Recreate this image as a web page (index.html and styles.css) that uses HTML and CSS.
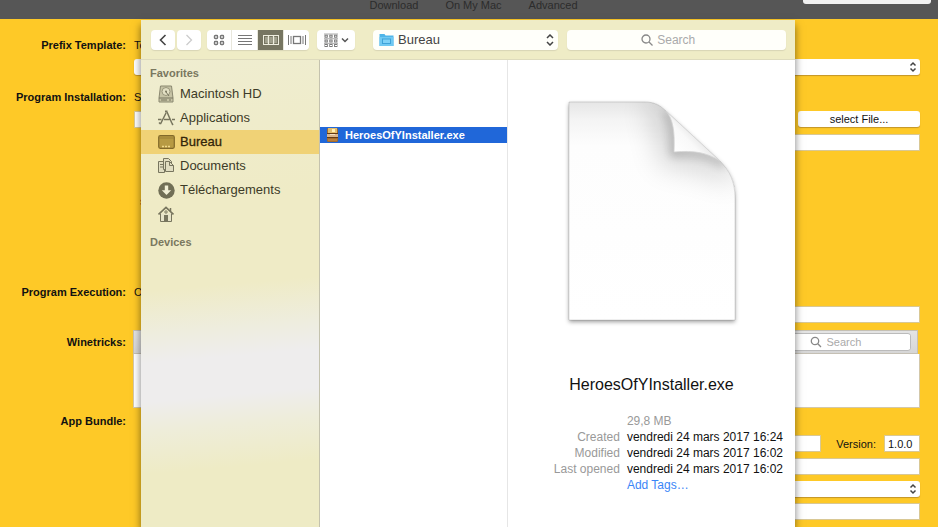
FILE: index.html
```html
<!DOCTYPE html>
<html lang="en">
<head>
    <meta charset="UTF-8">
    <meta name="viewport" content="width=device-width, initial-scale=1.0">
    <title>Heroes Of Y Installer</title>
    <link rel="stylesheet" href="styles.css">
</head>
<body>

    <header class="topbar">
        <nav class="topnav">
            <a href="#download">Download</a>
            <a href="#mac">On My Mac</a>
            <a href="#advanced">Advanced</a>
        </nav>
        <div class="topbox"></div>
    </header>

    <form class="settings">
        <section class="group">
            <label class="group-label" for="template">Prefix Template:</label>
            <div class="fields">
                <p>To</p>
                <div class="popup">
                    <select id="template"><option></option></select>
                    <svg class="arrows" viewBox="0 0 8 12"><path d="M1.500 4.500 4 2l2.500 2.500M1.500 7.500 4 10l2.500-2.500"/></svg>
                </div>
            </div>
        </section>

        <section class="group installation">
            <label class="group-label" for="program">Program Installation:</label>
            <div class="fields">
                <p>S</p>
                <div class="file-line">
                    <input type="text" id="program">
                    <button type="button">select File...</button>
                </div>
                <input type="text" class="indented" aria-label="Arguments">
                <p class="note">s</p>
            </div>
        </section>

        <section class="group execution">
            <label class="group-label" for="execution">Program Execution:</label>
            <div class="fields">
                <p>O</p>
                <input type="text" class="indented" id="execution">
            </div>
        </section>

        <section class="group winetricks">
            <label class="group-label" for="tricks">Winetricks:</label>
            <div class="tricks">
                <div class="tricks-bar">
                    <div class="tricks-search">
                        <svg class="glass" viewBox="0 0 12 12"><circle cx="5" cy="5" r="3.700"/><path d="m7.800 7.800 3.200 3.200"/></svg>
                        <input type="search" id="tricks" placeholder="Search">
                    </div>
                </div>
                <div class="tricks-list"></div>
            </div>
        </section>

        <section class="group bundle">
            <label class="group-label" for="bundle">App Bundle:</label>
            <div class="bundle-fields">
                <div class="version-line">
                    <input type="text" id="bundle">
                    <label for="version">Version:</label>
                    <input type="text" id="version" class="version" value="1.0.0">
                </div>
                <input type="text" aria-label="Identifier">
                <div class="popup">
                    <select aria-label="Category"><option></option></select>
                    <svg class="arrows" viewBox="0 0 8 12"><path d="M1.500 4.500 4 2l2.500 2.500M1.500 7.500 4 10l2.500-2.500"/></svg>
                </div>
                <input type="text" aria-label="Copyright">
            </div>
        </section>
    </form>

    <div class="dialog" role="dialog" aria-label="Open">
        <div class="toolbar">
            <div class="history">
                <button type="button" aria-label="Back"><svg width="10" height="14" viewBox="0 0 10 14"><path d="M7.500 2 2.500 7l5 5" fill="none" stroke="#444" stroke-width="1.600"/></svg></button>
                <button type="button" aria-label="Forward"><svg width="10" height="14" viewBox="0 0 10 14"><path d="m2.500 2 5 5-5 5" fill="none" stroke="#ccc" stroke-width="1.300"/></svg></button>
            </div>
            <div class="views">
                <button type="button" aria-label="Icons"><svg width="12" height="12" viewBox="0 0 12 12" fill="none" stroke="#777" stroke-width="1.400"><rect x="1.500" y="1.500" width="3" height="3" rx=".7"/><rect x="7.500" y="1.500" width="3" height="3" rx=".7"/><rect x="1.500" y="7.500" width="3" height="3" rx=".7"/><rect x="7.500" y="7.500" width="3" height="3" rx=".7"/></svg></button>
                <button type="button" aria-label="List"><svg width="14" height="12" viewBox="0 0 14 12"><path d="M0 1.500h14M0 4.500h14M0 7.500h14M0 10.500h14" stroke="#777"/></svg></button>
                <button type="button" class="active" aria-label="Columns"><svg width="16" height="12" viewBox="0 0 16 12"><rect x=".5" y="1.500" width="15" height="9" fill="none" stroke="#eeedde"/><path d="M2 3h3v6H2zM6.500 3h3v6h-3zM11 3h3v6h-3z" fill="#eeedde" opacity=".35"/><path d="M5.500 2v8M10.500 2v8" stroke="#eeedde" stroke-width="1.300"/></svg></button>
                <button type="button" aria-label="Cover Flow"><svg width="18" height="12" viewBox="0 0 18 12" fill="none" stroke="#777"><rect x="5.500" y="2.500" width="7" height="7" stroke-width="1.300"/><path d="M.5 1v10M3 2v8M15 2v8M17.500 1v10"/></svg></button>
            </div>
            <button type="button" class="arrange" aria-label="Arrange">
                <svg width="14" height="14" viewBox="0 0 14 14" fill="none" stroke="#777"><path d="M0 1h14M0 5.700h14M0 10.400h14" stroke-width=".6"/><rect x="1" y="2.200" width="2.300" height="2"/><rect x="5.800" y="2.200" width="2.300" height="2"/><rect x="10.600" y="2.200" width="2.300" height="2"/><rect x="1" y="7" width="2.300" height="2"/><rect x="5.800" y="7" width="2.300" height="2"/><rect x="10.600" y="7" width="2.300" height="2"/><rect x="1" y="11.500" width="2.300" height="2"/><rect x="5.800" y="11.500" width="2.300" height="2"/><rect x="10.600" y="11.500" width="2.300" height="2"/></svg>
                <svg width="8" height="6" viewBox="0 0 8 6"><path d="m1 1.500 3 3 3-3" fill="none" stroke="#555" stroke-width="1.500"/></svg>
            </button>
            <div class="location">
                <svg width="15" height="14" viewBox="0 0 15 14"><path d="M.5 1h5l1 1.500h8V13H.5z" fill="#50b5e8"/><path d="M.5 4h14v9H.5z" fill="#70c9f2"/><rect x="3.500" y="6" width="8" height="4.500" fill="#7fd2f7" stroke="#3fa3d8"/></svg>
                <select aria-label="Folder"><option>Bureau</option></select>
                <svg class="arrows" viewBox="0 0 8 12"><path d="M1 4l3-3 3 3M1 8l3 3 3-3"/></svg>
            </div>
            <label class="search">
                <svg class="glass" viewBox="0 0 12 12"><circle cx="5" cy="5" r="4"/><path d="m8 8 3.500 3.500"/></svg>
                <input type="search" placeholder="Search" aria-label="Search files">
            </label>
        </div>

        <div class="browser">
            <aside class="sidebar">
                <h2>Favorites</h2>
                <ul>
                    <li><a href="#hd"><svg width="16" height="18" viewBox="0 0 16 18"><path d="M2.500 1h11l1.500 12v4H1v-4z" fill="#c6c3a5" stroke="#8a8870"/><circle cx="8" cy="6.500" r="4" fill="#e3e0c4" stroke="#99967c"/><circle cx="8" cy="6.500" r="1" fill="#77755e"/><path d="M1 13h14M8 7l3 4" stroke="#77755e"/><path d="M3 15h6M11 15h2" stroke="#77755e"/></svg>Macintosh HD</a></li>
                    <li><a href="#apps"><svg width="17" height="16" viewBox="0 0 17 16" fill="none" stroke="#77755e" stroke-width="1.500"><path d="M8 3 2.500 14M9 2l5 11.500M0 9.500h3.500M6 9.500h5.500M14 9.500h3M1 12.500l1.500 1.500M14 13.500l1 1.500"/><path d="M7 1.500h2.500" stroke-width="2"/></svg>Applications</a></li>
                    <li class="selected"><a href="#bureau"><svg width="17" height="14" viewBox="0 0 17 14"><rect x=".7" y=".7" width="15.600" height="12.600" rx="1.500" fill="#b79a43" stroke="#82692a" stroke-width="1.200"/><path d="M1 3h15" stroke="#9a7f36"/><path d="M4 11.500h2M7 11.500h2M10 11.500h2" stroke="#f1d98b" stroke-width="1.500"/></svg>Bureau</a></li>
                    <li><a href="#documents"><svg width="16" height="16" viewBox="0 0 16 16" fill="#e0ddc1" stroke="#77755e"><path d="M.5 3.500h6v11h-6z"/><path d="M5.500.5h5l3 3v8h-8z"/><path d="M7.500 3.500h4l4 4v6h-8z"/><path d="M11.500 3.500v4h4M2 6.500h3M2 9h3" fill="none"/></svg>Documents</a></li>
                    <li><a href="#downloads"><svg width="17" height="17" viewBox="0 0 17 17"><circle cx="8.500" cy="8.500" r="8.200" fill="#716f56"/><path d="M6.800 3.500h3.400v4.700h3L8.500 13 3.800 8.200h3z" fill="#f2f0d6"/></svg>Téléchargements</a></li>
                    <li><a href="#home" aria-label="Home"><svg width="16" height="16" viewBox="0 0 16 16" fill="none" stroke="#77755e"><path d="M2.500 7.500v8h11v-8" fill="#e6e3c8"/><path d="m.5 8.500 7.500-7 7.500 7" stroke-width="1.700"/><path d="M12.500 2v3" stroke-width="1.500"/><rect x="6.500" y="9.500" width="3" height="6" fill="#77755e"/><circle cx="8" cy="6" r="1.200"/></svg></a></li>
                </ul>
                <h2>Devices</h2>
            </aside>

            <div class="files">
                <a class="file" href="#installer">
                    <svg width="11" height="14" viewBox="0 0 11 14"><rect width="11" height="14" rx="1.500" fill="#a46b2c"/><path d="M1 0h9v5H1z" fill="#e3bd6b"/><path d="M5 1h3v3H5z" fill="#fff0b8"/><path d="M0 5h11v4H0z" fill="#d9b48b"/><path d="M0 5.500h11M0 9.500h11" stroke="#633914"/><path d="M3 6.500h5" stroke="#f4e1c4"/><path d="M1 11h9v2H1z" fill="#b97e3c"/></svg>
                    HeroesOfYInstaller.exe
                </a>
            </div>

            <div class="preview">
                <svg class="document" width="183" height="232" viewBox="0 0 183 232">
                    <defs>
                        <linearGradient id="paper" x1="0" y1="0" x2="0" y2="1">
                            <stop offset="0" stop-color="#e6e6e6"/>
                            <stop offset=".08" stop-color="#f4f4f4"/>
                            <stop offset=".2" stop-color="#fdfdfd"/>
                            <stop offset="1" stop-color="#fff"/>
                        </linearGradient>
                        <linearGradient id="fold" gradientUnits="userSpaceOnUse" x1="114" y1="57" x2="136" y2="36">
                            <stop offset="0" stop-color="#fff"/>
                            <stop offset=".6" stop-color="#f9f9f9"/>
                            <stop offset="1" stop-color="#e4e4e4"/>
                        </linearGradient>
                        <clipPath id="edge">
                            <path d="M9 7h76c9 0 15 3 21 9l54 50c10 10 15 21 15 37v122H9z"/>
                        </clipPath>
                        <filter id="drop" x="-10%" y="-10%" width="120%" height="120%">
                            <feDropShadow dx="0" dy="2" stdDeviation="2" flood-opacity=".38"/>
                        </filter>
                        <filter id="wide" x="-80%" y="-80%" width="260%" height="260%">
                            <feGaussianBlur stdDeviation="15"/>
                        </filter>
                        <filter id="near" x="-50%" y="-50%" width="200%" height="200%">
                            <feGaussianBlur stdDeviation="5"/>
                        </filter>
                    </defs>
                    <path d="M9 7h76c9 0 15 3 21 9l54 50c10 10 15 21 15 37v122H9z" fill="#fff" filter="url(#drop)"/>
                    <g clip-path="url(#edge)">
                        <path d="M9 7h166v218H9z" fill="url(#paper)"/>
                        <path d="M95 5c14 14 15 36 17 54 24 0 44 4 60 20" fill="none" stroke="#000" stroke-width="22" opacity=".2" filter="url(#wide)"/>
                        <path d="M106 17c8 12 8 25 8 41 22-2 38 2 50 12" fill="none" stroke="#000" stroke-width="6" opacity=".24" filter="url(#near)"/>
                    </g>
                    <path d="M9 7h76c9 0 15 3 21 9l54 50c10 10 15 21 15 37v122H9z" fill="none" stroke="#000" stroke-opacity=".13"/>
                    <path d="M106 16c7 8 9 20 8 41 21-2 34 1 46 9z" fill="url(#fold)" stroke="#d4d4d4" stroke-width=".8"/>
                </svg>
                <h1>HeroesOfYInstaller.exe</h1>
                <table class="info">
                    <tr><th></th><td class="size">29,8 MB</td></tr>
                    <tr><th>Created</th><td>vendredi 24 mars 2017 16:24</td></tr>
                    <tr><th>Modified</th><td>vendredi 24 mars 2017 16:02</td></tr>
                    <tr><th>Last opened</th><td>vendredi 24 mars 2017 16:02</td></tr>
                    <tr><th></th><td><a href="#tags">Add Tags…</a></td></tr>
                </table>
            </div>
        </div>
    </div>

</body>
</html>
```
FILE: styles.css
```css
* {
    box-sizing: border-box;
}
body {
    margin: 0;
    height: 100vh;
    overflow: hidden;
    position: relative;
    background-color: #fec927;
    font-family: "Liberation Sans", Arial, sans-serif;
    font-size: 11px;
    line-height: 14px;
    color: #111;
}
p, h1, h2, ul {
    margin: 0;
    padding: 0;
}
ul {
    list-style: none;
}
a {
    color: inherit;
    text-decoration: none;
}
svg {
    display: block;
    flex: none;
}
input, select, button {
    font: inherit;
    color: inherit;
    margin: 0;
    padding: 0;
    border: 0;
    outline: 0;
    min-width: 0;
    background-color: #fff;
    appearance: none;
}

/* top bar */
.topbar {
    display: flex;
    justify-content: flex-end;
    height: 19px;
    padding-right: 7px;
    background-color: #565656;
}
.topnav {
    display: flex;
    flex: 1;
    justify-content: center;
    gap: 27px;
    padding-left: 144px;
    color: #2c2c2c;
    line-height: 10px;
}
.topbox {
    width: 128px;
    height: 4px;
    background-color: #f1f1f1;
    border-radius: 0 0 3px 3px;
}

/* settings form */
.settings {
    padding: 19px 18px 0 0;
}
.group {
    display: grid;
    grid-template-columns: 126px 1fr;
    column-gap: 8px;
}
.group-label {
    font-weight: bold;
    text-align: right;
}
.fields {
    display: flex;
    flex-direction: column;
    gap: 7px;
}
.settings input {
    height: 17px;
    border: 1px solid #d9c894;
}
.popup {
    display: flex;
    align-items: center;
    height: 16px;
    padding-right: 3px;
    background-color: #fff;
    border-radius: 3px;
    box-shadow: 0 1px 1px #c3952a;
}
.popup select {
    flex: 1;
    background-color: transparent;
}
.arrows {
    width: 8px;
    height: 12px;
    fill: none;
    stroke: #444;
    stroke-width: 1.5;
    pointer-events: none;
}
.installation {
    margin-top: 15px;
}
.installation .fields {
    gap: 6px;
}
.file-line {
    display: flex;
    gap: 8px;
    padding-top: 1px;
}
.file-line input {
    flex: 1;
}
.file-line button {
    width: 122px;
    height: 16px;
    border-radius: 3px;
    box-shadow: 0 1px 1px #c3952a;
}
.settings .indented {
    margin-left: 60px;
}
.note {
    margin-top: 37px;
    padding-left: 6px;
}
.execution {
    margin-top: 77px;
}
.winetricks {
    margin-top: 7px;
    column-gap: 7px;
}
.winetricks .group-label {
    padding-top: 5px;
}
.tricks-bar {
    display: flex;
    justify-content: flex-end;
    padding: 2px 6px;
    margin-right: 2px;
    background: linear-gradient(#e4e4e4, #d6d6d6);
    border: 1px solid #c5c0b4;
}
.tricks-search {
    display: flex;
    align-items: center;
    width: 50%;
    height: 18px;
    padding-left: 283px;
    gap: 5px;
    background-color: #fff;
    border: 1px solid #bbb;
    border-radius: 3px;
}
.tricks-search input {
    flex: 1;
    height: 14px;
    border: 0;
}
.glass {
    width: 12px;
    height: 12px;
    fill: none;
    stroke: #888;
    stroke-width: 1.3;
}
input::placeholder {
    color: #aaa;
}
.tricks-list {
    height: 54px;
    background-color: #fff;
    border: 1px solid #d3c8aa;
    border-top: 0;
}
.bundle {
    margin-top: 6px;
}
.bundle-fields {
    display: flex;
    flex-direction: column;
    gap: 6px;
    padding: 21px 0 0 60px;
}
.version-line {
    display: flex;
    align-items: center;
}
.version-line input {
    flex: 1;
}
.version-line label {
    padding: 0 8px 0 15px;
}
.version-line .version {
    flex: none;
    width: 36px;
    padding-left: 3px;
}

/* open dialog */
.dialog {
    position: absolute;
    top: 20px;
    bottom: 0;
    left: 141px;
    right: 143px;
    display: flex;
    flex-direction: column;
    background-color: #fff;
    box-shadow: 0 5px 8px rgba(0, 0, 0, 0.5);
}
.toolbar {
    display: flex;
    align-items: center;
    height: 40px;
    padding: 0 9px 0 10px;
    background-color: #efecc6;
    border-bottom: 1px solid #dedbbd;
    font-size: 13px;
    color: #444;
}
.toolbar button {
    display: flex;
    align-items: center;
    justify-content: center;
    height: 20px;
}
.history {
    display: flex;
    gap: 2px;
    margin-right: 6px;
}
.history button {
    width: 24px;
    border-radius: 4px;
    box-shadow: 0 1px 1px #d8d5b5;
}
.views {
    display: flex;
    overflow: hidden;
    border-radius: 4px;
    box-shadow: 0 1px 1px #d8d5b5;
}
.views button {
    width: 24px;
}
.views button + button {
    width: 26px;
    border-left: 1px solid #e8e7dc;
}
.views .active {
    background-color: #767561;
}
.toolbar .arrange {
    width: 38px;
    gap: 3px;
    margin: 0 18px 0 8px;
    border-radius: 4px;
    box-shadow: 0 1px 1px #d8d5b5;
}
.location {
    display: flex;
    align-items: center;
    flex: 5;
    height: 20px;
    gap: 4px;
    margin-right: 9px;
    padding: 0 4px 0 6px;
    background-color: #fffffa;
    border-radius: 4px;
    box-shadow: 0 1px 1px #d8d5b5;
}
.location select {
    flex: 1;
    background-color: transparent;
}
.search {
    display: flex;
    align-items: center;
    justify-content: center;
    flex: 6;
    height: 20px;
    gap: 4px;
    padding-right: 10px;
    background-color: #fffffa;
    border-radius: 4px;
    box-shadow: 0 1px 1px #d8d5b5;
}
.search input {
    flex: none;
    width: 44px;
    background-color: transparent;
}
.search input::-webkit-search-cancel-button {
    display: none;
}
.search input::placeholder {
    font-size: 12px;
}
.browser {
    display: flex;
    flex: 1;
    min-height: 0;
}
.sidebar {
    width: 179px;
    padding-top: 6px;
    border-right: 1px solid #c4c2ae;
    background: linear-gradient(175deg, #efedd0 0%, #efebc6 30%, #efebc6 48%, #eeedde 57%, #eeeded 63%, #eeeded 71%, #eeedda 77%, #eeebc5 86%, #eeebc5 100%);
    color: #3d3b28;
}
.sidebar h2 {
    padding-left: 9px;
    font-size: 11px;
    color: #7a785f;
}
.sidebar ul {
    padding: 2px 0 9px;
    font-size: 13px;
}
.sidebar a {
    display: grid;
    grid-template-columns: 17px 1fr;
    align-items: center;
    column-gap: 5px;
    height: 24px;
    padding-left: 17px;
}
.sidebar .selected {
    background-color: #f0d276;
    color: #33250a;
    -webkit-text-stroke: 0.3px #33250a;
}
.files {
    width: 188px;
    padding-top: 67px;
    border-right: 1px solid #e6e6e6;
}
.file {
    display: flex;
    align-items: center;
    gap: 7px;
    height: 16px;
    padding-left: 7px;
    background-color: #2067d9;
    color: #fff;
    font-weight: bold;
}
.preview {
    display: flex;
    flex: 1;
    flex-direction: column;
    align-items: center;
    padding-top: 35px;
}
.preview h1 {
    margin-top: 48px;
    font-size: 16px;
    font-weight: normal;
    line-height: 20px;
}
.info {
    align-self: flex-end;
    margin: 18px 12px 0 0;
    border-collapse: collapse;
    line-height: 16px;
    white-space: nowrap;
}
.info th, .info td {
    padding: 0;
    font-size: 12px;
    font-weight: normal;
}
.info th {
    padding-right: 7px;
    text-align: right;
    color: #999;
}
.info .size {
    color: #999;
}
.info a {
    color: #3b86f7;
}
```
